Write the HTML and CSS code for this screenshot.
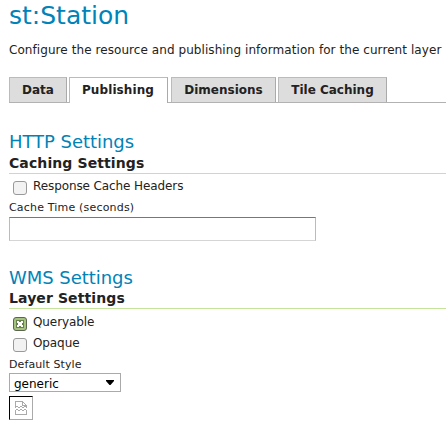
FILE: index.html
```
<!DOCTYPE html>
<html lang="en">
<head>
<meta charset="utf-8">
<title>st:Station</title>
<link rel="stylesheet" href="styles.css">
</head>
<body>
<main class="page">
  <h1 class="title">st:Station</h1>
  <p class="intro">Configure the resource and publishing information for the current layer</p>
  <nav class="tabs">
    <a class="tab tab-data">Data</a>
    <a class="tab tab-publishing active">Publishing</a>
    <a class="tab tab-dimensions">Dimensions</a>
    <a class="tab tab-caching">Tile Caching</a>
  </nav>
  <section class="http">
    <h2 class="heading">HTTP Settings</h2>
    <h3 class="subheading">Caching Settings</h3>
    <label class="check"><span class="box"></span>Response Cache Headers</label>
    <div class="label">Cache Time (seconds)</div>
    <input class="field" type="text">
  </section>
  <section class="wms">
    <h2 class="heading">WMS Settings</h2>
    <h3 class="subheading">Layer Settings</h3>
    <label class="check"><span class="box checked"><svg width="14" height="14" viewBox="0 0 14 14" shape-rendering="crispEdges"><path fill="#66804f" d="M3 3h8v8H3z"/><path fill="#fff" d="M4 4h2v1h2V4h2v2H9v2h1v2H8V9H6v1H4V8h1V6H4z"/></svg></span>Queryable</label>
    <label class="check"><span class="box"></span>Opaque</label>
    <div class="label style-label">Default Style</div>
    <div class="select"><span>generic</span><svg width="8" height="5" viewBox="0 0 8 5"><path d="M0 0h8v1L4.500 5h-1L0 1z"/></svg></div>
    <div class="legend"><svg width="12" height="14" viewBox="0 0 12 14" fill="none" stroke="#aaa" shape-rendering="crispEdges"><path d="M.500 6V.500H8M7.500 1v3.500H11M8 1l3 3M11.500 4v3M0 7l2-2 2 2 2-2 2 2 2-2 2 2M0 10l2-2 2 2 2-2 2 2 2-2 2 2M.500 10v3.500h11V10"/></svg></div>
  </section>
</main>
</body>
</html>
```

FILE: styles.css
```
* { box-sizing: border-box; }
body {
  margin: 0;
  background: #fff;
  color: #222;
  font: 12px/16px "DejaVu Sans", sans-serif;
  overflow: hidden;
}
.page { padding-left: 9px; }
h1, h2, h3, p { margin: 0; }
.title {
  color: #0083b8;
  font-size: 25px;
  font-weight: normal;
  line-height: 32px;
}
.intro { margin-top: 10px; letter-spacing: .07px; white-space: nowrap; }
.tabs {
  display: flex;
  height: 26px;
  margin-top: 19px;
  border-bottom: 1px solid #b2b2b2;
}
.tab {
  height: 25px;
  margin-right: 2px;
  border: 1px solid #bbb;
  border-right-color: #aaa;
  border-bottom: 0;
  background: #ddd;
  font-weight: bold;
  line-height: 24px;
  text-align: center;
}
.tab-data { width: 58px; }
.tab-publishing { width: 99px; margin-right: 3px; letter-spacing: .1px; }
.tab-dimensions { width: 105px; }
.tab-caching { width: 109px; }
.tab.active { height: 26px; padding-right: 1px; background: #fff; }
.http { margin-top: 29px; }
.wms { margin-top: 27px; }
.heading {
  color: #0083b8;
  font-size: 18px;
  font-weight: normal;
  letter-spacing: -.05px;
  line-height: 20px;
}
.subheading {
  height: 21px;
  border-bottom: 1px solid #c4e39b;
  font-size: 14px;
  letter-spacing: .1px;
  line-height: 21px;
}
.http .subheading { height: 22px; border-color: #c8dfa8; line-height: 22px; }
.check {
  display: flex;
  height: 21px;
  margin-left: 4px;
  padding-top: 4px;
  letter-spacing: -.1px;
}
.wms .subheading + .check { margin-top: 1px; }
.box {
  width: 14px;
  height: 14px;
  margin: 3px 6px 0 0;
  border: 1px solid #999;
  border-radius: 3px;
  background: #f2f2f2;
}
.box.checked { border-color: #5b6551; background: #a4c37f; }
.box svg { display: block; margin: -1px; }
.label {
  margin-top: 6px;
  font-size: 11px;
  letter-spacing: .18px;
  line-height: 14px;
}
.field {
  display: block;
  width: 307px;
  height: 24px;
  margin: 2px 0 0;
  padding: 2px;
  border: 1px solid;
  border-color: #777 #bbb #d5d5d5 #bbb;
  background: #fff;
}
.style-label { letter-spacing: .1px; }
.select {
  display: flex;
  align-items: center;
  justify-content: space-between;
  width: 112px;
  height: 19px;
  margin-top: 1px;
  padding: 2px 6px 0 4px;
  border: 1px solid #aaa;
  color: #000;
}
.select svg { margin-bottom: 2px; }
.legend {
  display: grid;
  place-items: center;
  width: 24px;
  height: 24px;
  margin-top: 4px;
  border: 1px solid;
  border-color: #000 #aaa #aaa #000;
}
```
